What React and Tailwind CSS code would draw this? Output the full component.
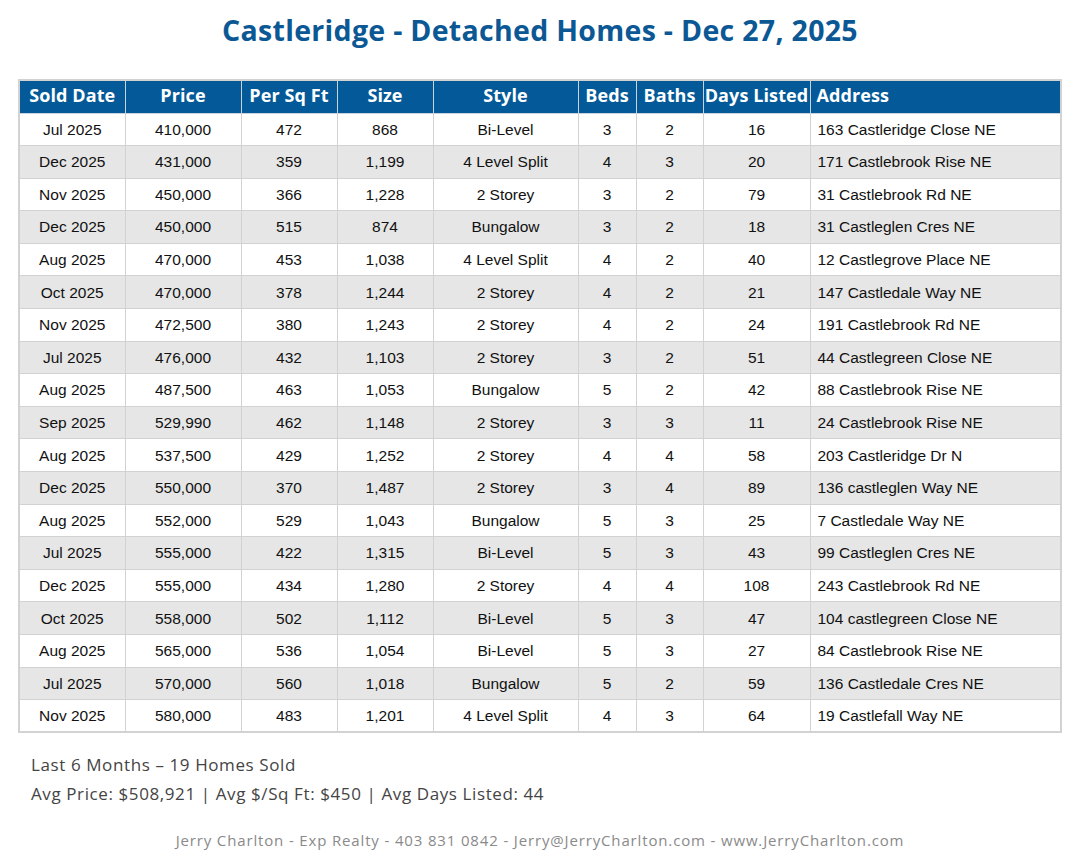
const ROWS = [
  ["Jul 2025", "410,000", "472", "868", "Bi-Level", "3", "2", "16", "163 Castleridge Close NE"],
  ["Dec 2025", "431,000", "359", "1,199", "4 Level Split", "4", "3", "20", "171 Castlebrook Rise NE"],
  ["Nov 2025", "450,000", "366", "1,228", "2 Storey", "3", "2", "79", "31 Castlebrook Rd NE"],
  ["Dec 2025", "450,000", "515", "874", "Bungalow", "3", "2", "18", "31 Castleglen Cres NE"],
  ["Aug 2025", "470,000", "453", "1,038", "4 Level Split", "4", "2", "40", "12 Castlegrove Place NE"],
  ["Oct 2025", "470,000", "378", "1,244", "2 Storey", "4", "2", "21", "147 Castledale Way NE"],
  ["Nov 2025", "472,500", "380", "1,243", "2 Storey", "4", "2", "24", "191 Castlebrook Rd NE"],
  ["Jul 2025", "476,000", "432", "1,103", "2 Storey", "3", "2", "51", "44 Castlegreen Close NE"],
  ["Aug 2025", "487,500", "463", "1,053", "Bungalow", "5", "2", "42", "88 Castlebrook Rise NE"],
  ["Sep 2025", "529,990", "462", "1,148", "2 Storey", "3", "3", "11", "24 Castlebrook Rise NE"],
  ["Aug 2025", "537,500", "429", "1,252", "2 Storey", "4", "4", "58", "203 Castleridge Dr N"],
  ["Dec 2025", "550,000", "370", "1,487", "2 Storey", "3", "4", "89", "136 castleglen Way NE"],
  ["Aug 2025", "552,000", "529", "1,043", "Bungalow", "5", "3", "25", "7 Castledale Way NE"],
  ["Jul 2025", "555,000", "422", "1,315", "Bi-Level", "5", "3", "43", "99 Castleglen Cres NE"],
  ["Dec 2025", "555,000", "434", "1,280", "2 Storey", "4", "4", "108", "243 Castlebrook Rd NE"],
  ["Oct 2025", "558,000", "502", "1,112", "Bi-Level", "5", "3", "47", "104 castlegreen Close NE"],
  ["Aug 2025", "565,000", "536", "1,054", "Bi-Level", "5", "3", "27", "84 Castlebrook Rise NE"],
  ["Jul 2025", "570,000", "560", "1,018", "Bungalow", "5", "2", "59", "136 Castledale Cres NE"],
  ["Nov 2025", "580,000", "483", "1,201", "4 Level Split", "4", "3", "64", "19 Castlefall Way NE"],
];

const HEADERS = ["Sold Date", "Price", "Per Sq Ft", "Size", "Style", "Beds", "Baths", "Days Listed", "Address"];
const WIDTHS = ["w-[106px]", "w-[116px]", "w-[96px]", "w-[96px]", "w-[145px]", "w-[58px]", "w-[67px]", "w-[107px]", "w-[251px]"];

const heading = { fontFamily: '"Open Sans", "DejaVu Sans", sans-serif' };
const body = { fontFamily: '"Liberation Sans", Arial, sans-serif' };

export default function App() {
  return (
    <div className="w-[1080px] h-[868px] bg-white flex flex-col items-center" style={heading}>
      {/* Title */}
      <h1 className="mt-[12px] text-[28.5px] font-bold text-[#0b5895] leading-[36px] tracking-[0.3px]">
        Castleridge - Detached Homes - Dec 27, 2025
      </h1>

      {/* Sales table */}
      <table className="mt-[31px] w-[1042px] table-fixed border-collapse border-2 border-[#d2d2d2]">
        <thead>
          <tr className="h-[33px] bg-[#045a98]">
            {HEADERS.map((h, i) => (
              <th
                key={h}
                className={`${WIDTHS[i]} border border-[#c8d3de] text-white text-[18px] font-bold whitespace-nowrap p-0 pb-[3px] leading-none tracking-[0.1px] ${
                  i === 8 ? "text-left pl-[6px]" : "text-center"
                }`}
              >
                {h}
              </th>
            ))}
          </tr>
        </thead>
        <tbody>
          {ROWS.map((row, r) => (
            <tr key={r} className={`h-[32.6px] ${r % 2 === 1 ? "bg-[#e6e6e6]" : "bg-white"}`}>
              {row.map((cell, i) => (
                <td
                  key={i}
                  style={body}
                  className={`border border-[#d2d2d2] text-[15.5px] text-[#111] p-0 ${
                    i === 8 ? "text-left pl-[7px]" : "text-center"
                  }`}
                >
                  {cell}
                </td>
              ))}
            </tr>
          ))}
        </tbody>
      </table>

      {/* Summary */}
      <div className="self-start ml-[31px] mt-[17px] text-[17px] text-[#444] leading-[29px] tracking-[0.6px]">
        <p>Last 6 Months – 19 Homes Sold</p>
        <p>Avg Price: $508,921 | Avg $/Sq Ft: $450 | Avg Days Listed: 44</p>
      </div>

      {/* Footer */}
      <p className="mt-[21px] text-[15px] text-[#8a8a8a] tracking-[0.85px]">
        Jerry Charlton - Exp Realty - 403 831 0842 - Jerry@JerryCharlton.com - www.JerryCharlton.com
      </p>
    </div>
  );
}
